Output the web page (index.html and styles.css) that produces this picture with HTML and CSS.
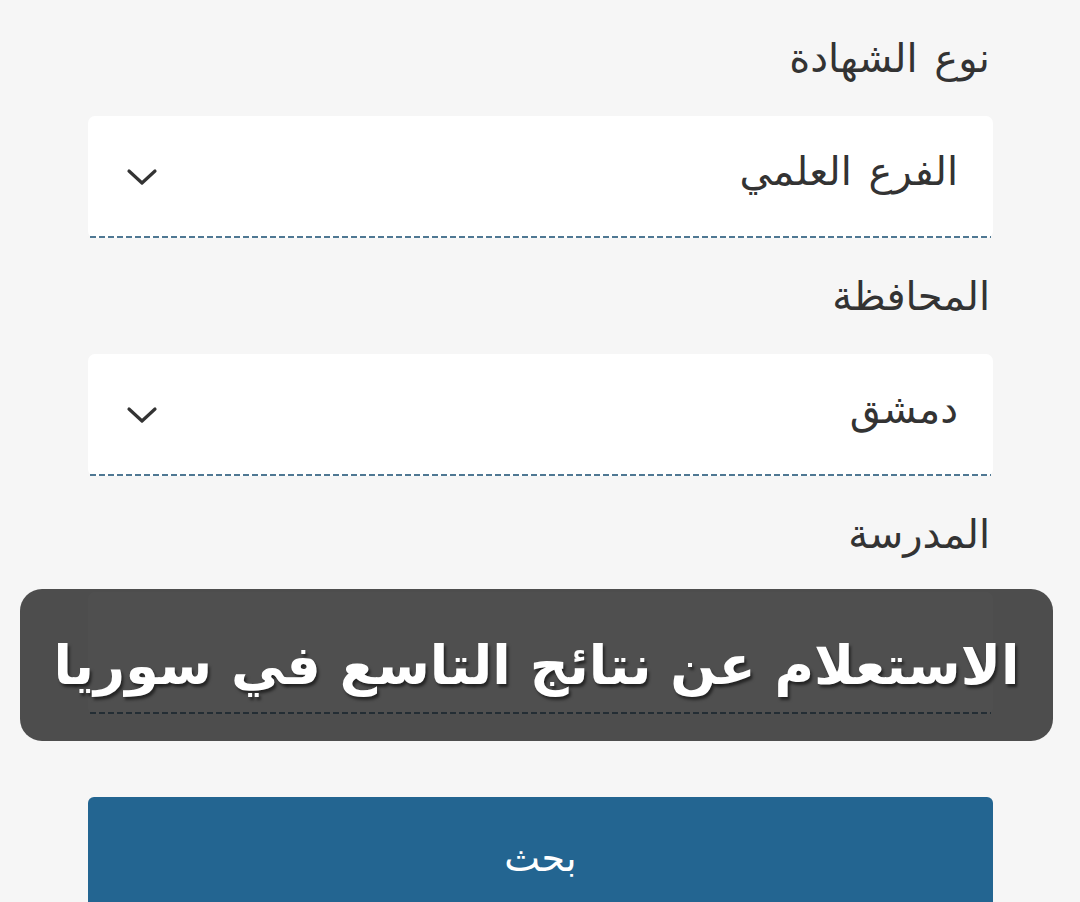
FILE: index.html
```html
<!DOCTYPE html>
<html lang="ar" dir="rtl">
<head>
  <meta charset="UTF-8" />
  <title>نتائج التاسع</title>
  <link rel="stylesheet" href="styles.css">
</head>
<body>

  <main class="form">
    <div class="field">
      <label class="field-label">نوع الشهادة</label>
      <div class="select">
        <span class="select-value">الفرع العلمي</span>
        <svg class="chevron" width="32" height="20" viewBox="0 0 32 20"><path d="M3 4 L16 16 L29 4" fill="none" stroke="#333" stroke-width="3.2" stroke-linecap="round" stroke-linejoin="round"/></svg>
      </div>
    </div>

    <div class="field">
      <label class="field-label">المحافظة</label>
      <div class="select">
        <span class="select-value">دمشق</span>
        <svg class="chevron" width="32" height="20" viewBox="0 0 32 20"><path d="M3 4 L16 16 L29 4" fill="none" stroke="#333" stroke-width="3.2" stroke-linecap="round" stroke-linejoin="round"/></svg>
      </div>
    </div>

    <div class="field">
      <label class="field-label">المدرسة</label>
      <div class="select">
        <span class="select-value"></span>
      </div>
    </div>

    <button class="search">بحث</button>
  </main>

  <div class="toast">الاستعلام عن نتائج التاسع في سوريا</div>

</body>
</html>
```

FILE: styles.css
```css
body {
  margin: 0;
  padding: 0;
  background: #f6f6f6;
  font-family: 'DejaVu Sans', 'Noto Sans', sans-serif;
  color: #333;
  overflow: hidden;
}

.form {
  margin: 0 87px 0 88px;
}

.field-label {
  display: block;
  height: 116px;
  line-height: 116px;
  font-size: 40px;
  word-spacing: 4px;
  padding-right: 3px;
  color: #333;
}

.select {
  position: relative;
  height: 122px;
  background: #fff;
  border-radius: 7px;
  display: flex;
  align-items: center;
  justify-content: space-between;
  padding: 0 35px 0 38px;
  box-sizing: border-box;
}

.select::after {
  content: "";
  position: absolute;
  left: 2px;
  right: 2px;
  bottom: 0;
  height: 2px;
  background: repeating-linear-gradient(to right, #4f7893 0 6px, transparent 6px 9px);
}

.select-value {
  font-size: 40px;
  word-spacing: 4px;
  margin-top: -12px;
  color: #333;
}

.chevron {
  display: block;
}

.search {
  display: block;
  width: 100%;
  height: 130px;
  margin-top: 83px;
  background: #236591;
  color: #fff;
  border: none;
  border-radius: 6px 6px 0 0;
  font-family: inherit;
  font-size: 38px;
  padding-bottom: 10px;
}

.toast {
  position: absolute;
  left: 20px;
  top: 589px;
  width: 1033px;
  height: 152px;
  border-radius: 22px;
  background: rgba(20, 20, 20, 0.75);
  color: #fff;
  font-size: 54px;
  font-weight: bold;
  display: flex;
  align-items: center;
  justify-content: center;
  text-shadow: 2px 3px 3px rgba(0, 0, 0, 0.55);
  white-space: nowrap;
}
```
